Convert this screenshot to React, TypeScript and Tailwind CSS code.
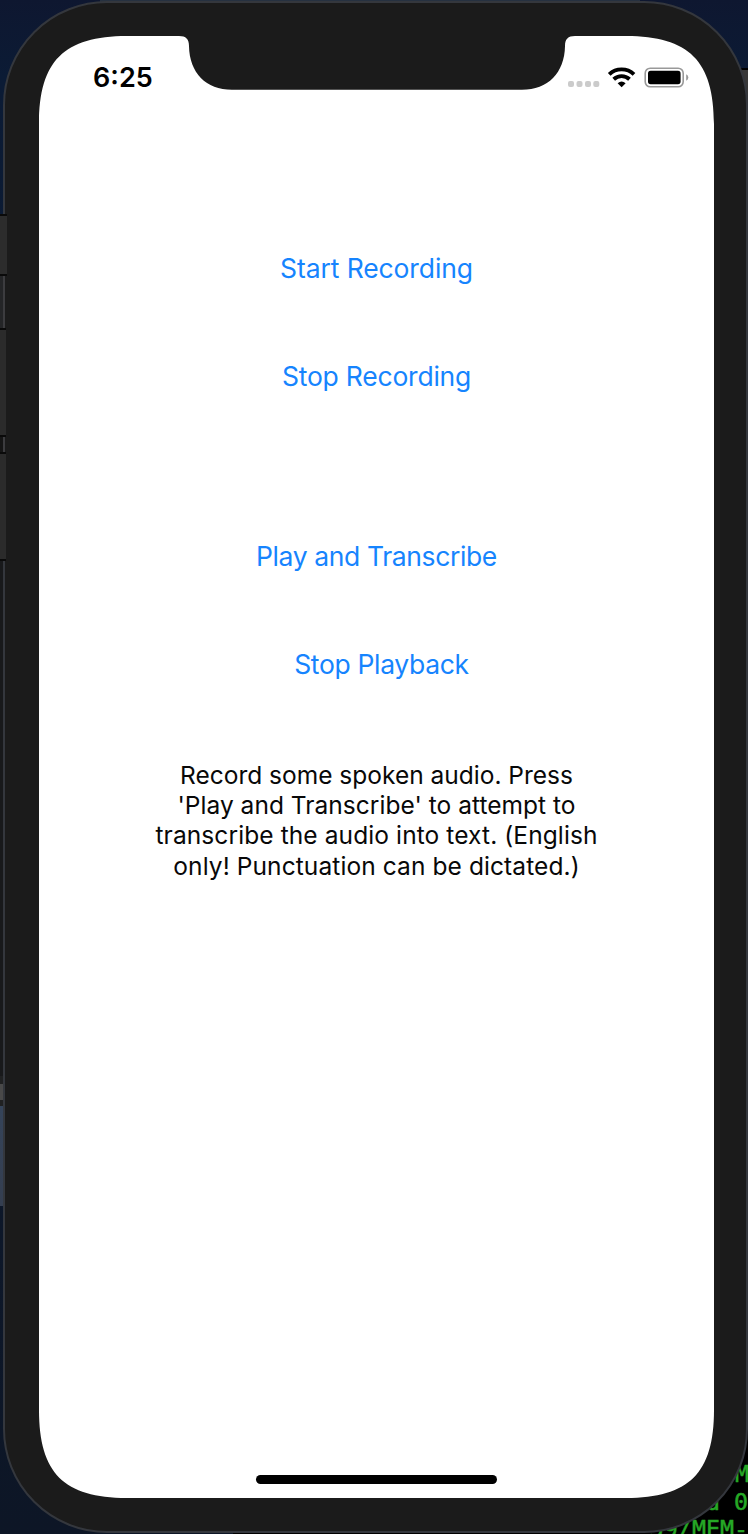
function Desktop() {
  return (
    <div className="absolute inset-0 overflow-hidden bg-[#0b1b35]">
      <div className="absolute inset-0 bg-linear-to-b from-[#0e1730] via-[#0b1b35] via-5% to-[#0d1626]" />
      <div className="absolute top-0 left-[100px] h-[6px] w-[540px] bg-[#263140]" />
      <div className="absolute top-[68px] right-0 h-[1412px] w-[40px] border-t-2 border-black bg-[#383838]" />
      <div className="absolute top-[561px] left-0 h-[515px] w-[6px] bg-[#18191b]" />
      <div className="absolute top-[1076px] left-0 h-[30px] w-[6px] bg-[#202122]" />
      <div className="absolute top-[1084px] left-0 h-[16px] w-[6px] bg-[#494949]" />
      <div className="absolute top-[1106px] left-0 h-[100px] w-[6px] bg-linear-to-b from-[#35445a] to-[#343e50]" />
      <div className="absolute right-0 bottom-0 h-[110px] w-[515px] overflow-hidden bg-black font-['DejaVu_Sans_Mono','Liberation_Mono',monospace] text-[23.3px] leading-[28px] text-[#26a826] [-webkit-text-stroke:0.5px_#26a826]">
        <div className="absolute top-[36px] right-[-1px]">M</div>
        <div className="absolute top-[64px] right-0">d 0</div>
        <div className="absolute top-[91px] right-0 whitespace-pre">59/MEM-</div>
      </div>
    </div>
  );
}

const SEAMS = [
  { id: "a", className: "absolute top-[214px] left-0 h-[62px] w-[7px] border-y-2 border-[#0a0a0a] bg-[#2c2c2c]" },
  { id: "b", className: "absolute top-[276px] left-0 h-[52px] w-[5px] border-r-2 border-[#3c3c3f] bg-[#242527]" },
  { id: "c", className: "absolute top-[328px] left-0 h-[109px] w-[6px] border-y-2 border-[#0a0a0a] bg-[#2b2b2b]" },
  { id: "d", className: "absolute top-[437px] left-0 h-[16px] w-[5px] border-r-2 border-[#3c3c3f] bg-[#151515]" },
  { id: "e", className: "absolute top-[452px] left-0 h-[109px] w-[6px] border-y-2 border-[#0a0a0a] bg-[#2b2b2b]" },
];

function StatusIcons() {
  return (
    <svg width="122" height="22" viewBox="0 0 122 22" className="block">
      <g fill="#cbcbcb">
        <rect x="0" y="14" width="6" height="6" rx="2" />
        <rect x="8.5" y="14" width="6" height="6" rx="2" />
        <rect x="17" y="14" width="6" height="6" rx="2" />
        <rect x="25.3" y="14" width="6" height="6" rx="2" />
      </g>
      <g fill="none" stroke="#000" strokeWidth="3.9">
        <path d="M41.2 7.3A18 18 0 0 1 66 7.3" />
        <path d="M45.7 12.2A11.6 11.6 0 0 1 61.5 12.2" />
      </g>
      <path d="M49.6 16.2Q53.6 12.8 57.6 16.2L53.6 20.3Z" fill="#000" />
      <rect x="77.2" y="1.2" width="38" height="18.6" rx="5" fill="none" stroke="#999" strokeWidth="1.6" />
      <rect x="80" y="3.8" width="32.6" height="13.4" rx="2.6" fill="#000" />
      <path d="M118.2 7.2Q120.3 8.2 120.3 10.5T118.2 13.8Z" fill="#999" />
    </svg>
  );
}

export default function App() {
  return (
    <main className="relative flex h-[1534px] w-[748px] overflow-hidden font-['Inter','Liberation_Sans',sans-serif]">
      <Desktop />
      <div className="relative mt-px ml-[3px] h-[1532px] w-[745px] shrink-0 rounded-[104px] border-2 border-[#34373d] bg-[#1b1b1b] pt-[33px] pl-[34px]">
        <div className="flex h-[1462px] w-[675px] flex-col items-center bg-white [clip-path:path('M0_88C0_25_25_0_88_0H140C147_0_150_3_150_10C150.5_37_167_53.8_193_53.8H483C509_53.8_525.5_37_526_10C526_3_529_0_536_0H587C650_0_675_25_675_88V1374C675_1437_650_1462_587_1462H88C25_1462_0_1437_0_1374Z')]">
          <header className="flex h-[80px] w-full shrink-0 justify-between pt-[26px] pr-[24px] pl-[54px]">
            <time className="h-[32px] text-[27px] leading-[32px] font-semibold">6:25</time>
            <div className="pt-[5px]">
              <StatusIcons />
            </div>
          </header>
          <div className="flex flex-col items-center text-[26.5px] leading-[32px] text-[#1684fe]">
            <button className="mt-[136px] tracking-[-0.11px]">Start Recording</button>
            <button className="mt-[76px] tracking-[-0.22px]">Stop Recording</button>
            <button className="mt-[148px] tracking-[-0.38px]">Play and Transcribe</button>
            <button className="mt-[76px] ml-[10px] tracking-[-0.33px]">Stop Playback</button>
          </div>
          <p className="mt-[80px] flex flex-col items-center text-[24.5px] leading-[30.2px] whitespace-nowrap text-[#080808]">
            <span>Record some spoken audio. Press</span>
            <span className="tracking-[0.03px]">'Play and Transcribe' to attempt to</span>
            <span className="tracking-[0.1px]">transcribe the audio into text. (English</span>
            <span className="tracking-[0.09px]">only! Punctuation can be dictated.)</span>
          </p>
          <div className="mt-auto mb-[14px] h-[9px] w-[241px] rounded-full bg-black" />
        </div>
      </div>
      {SEAMS.map((seam) => (
        <div key={seam.id} className={seam.className} />
      ))}
    </main>
  );
}
